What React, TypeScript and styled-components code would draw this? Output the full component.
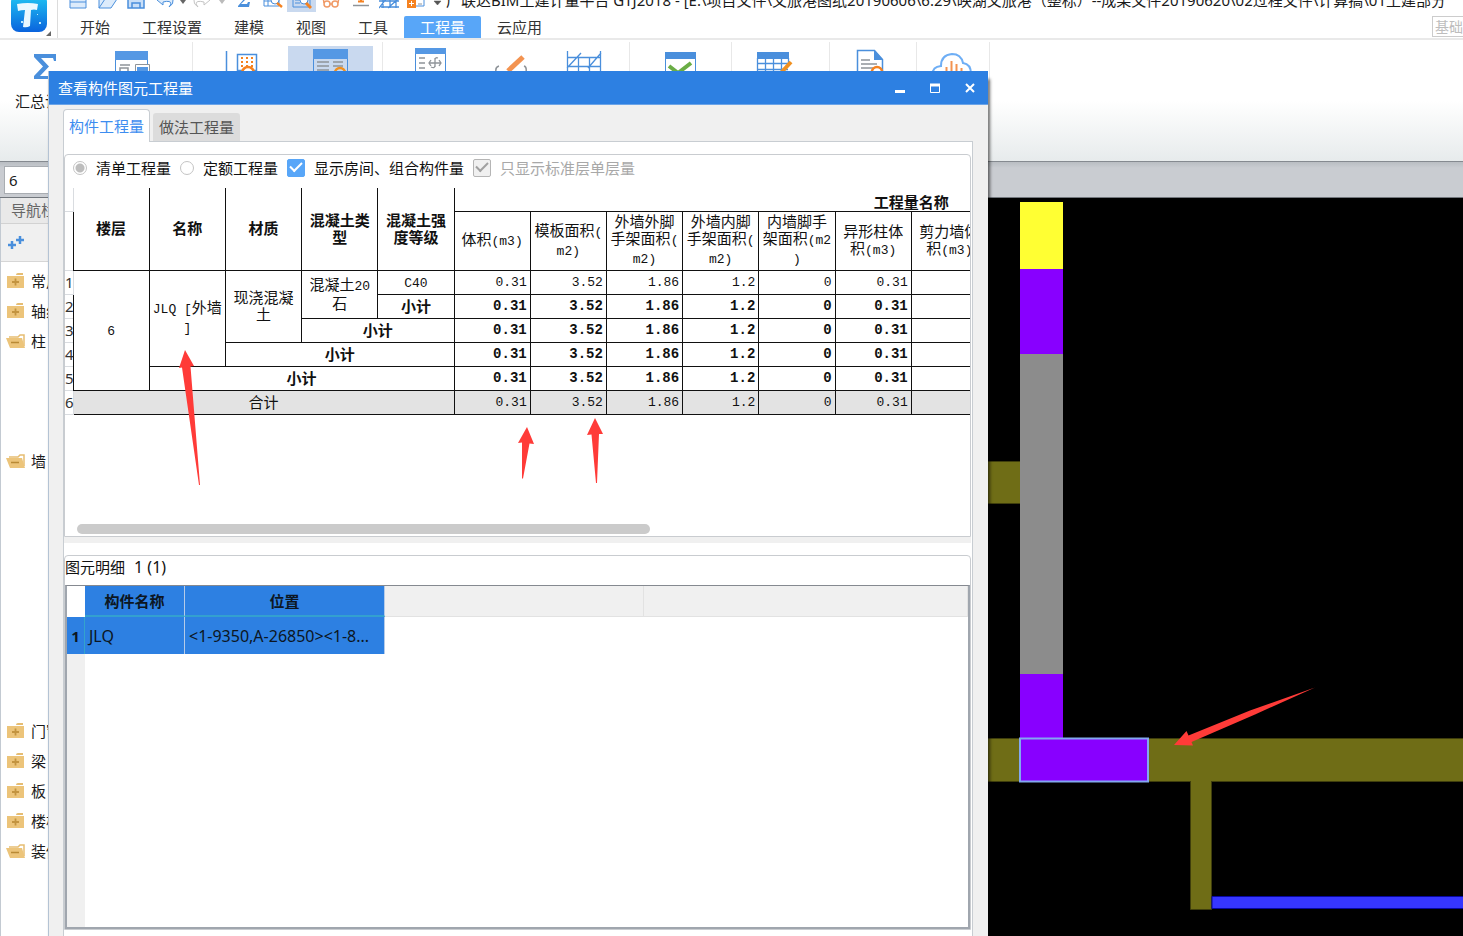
import React from "react";
import styled, { createGlobalStyle, css } from "styled-components";

const GlobalStyle = createGlobalStyle`
  * { box-sizing: border-box; }
  body {
    margin: 0;
    background: #000;
    color: #1a1a1a;
    font: 15px/20px "Noto Sans", "Noto Sans CJK SC", sans-serif;
  }
  button, input { font: inherit; color: inherit; }
  button { border: 0; padding: 0; margin: 0; background: none; }
`;

const Shell = styled.div`
  position: relative;
  display: flex;
  flex-direction: column;
  height: 100vh;
  overflow: hidden;
`;

/* ---------- header ---------- */

const Header = styled.header`
  display: flex;
  flex: none;
  height: 40px;
  background: #fff;
  border-bottom: 2px solid #e9e9e9;
`;

const LogoButton = styled.button`
  width: 58px;
  flex: none;
  border-right: 1px solid #dcdcdc;
  svg { display: block; }
`;

const HeaderMain = styled.div`
  flex: 1;
  min-width: 0;
  display: flex;
  flex-direction: column;
`;

const QuickRow = styled.div`
  display: flex;
  height: 16px;
  padding-left: 5px;
  overflow: hidden;
`;

const QuickButton = styled.button<{ $width: number; $active?: boolean }>`
  flex: none;
  display: flex;
  justify-content: center;
  width: ${(p) => p.$width}px;
  height: 12px;
  background: ${(p) => (p.$active ? "#c9d9ef" : "transparent")};
  svg { flex: none; }
`;

const WindowTitle = styled.h1`
  margin: -10px 0 0;
  font-size: 15px;
  line-height: 20px;
  font-weight: 400;
  white-space: nowrap;
`;

const MenuRow = styled.nav`
  display: flex;
  height: 23px;
  padding-left: 6px;
`;

const MenuTab = styled.button<{ $active?: boolean }>`
  padding: 0 16px;
  line-height: 22px;
  white-space: nowrap;
  color: ${(p) => (p.$active ? "#fff" : "#333")};
  background: ${(p) => (p.$active ? "#58a6f8" : "transparent")};
  border-radius: 2px 2px 0 0;
`;

const SearchBox = styled.div`
  width: 31px;
  height: 21px;
  margin-left: auto;
  padding-left: 2px;
  overflow: hidden;
  white-space: nowrap;
  font-size: 14px;
  line-height: 19px;
  color: #bdbdbd;
  border: 1px solid #ccc;
  border-right: 0;
`;

/* ---------- ribbon ---------- */

const Ribbon = styled.div`
  display: flex;
  flex: none;
  height: 122px;
  padding-top: 2px;
  background: linear-gradient(#fff 50%, #e7ebec);
  border-bottom: 1px solid #858a90;
`;

const RibbonGroup = styled.div<{ $width: number }>`
  display: flex;
  width: ${(p) => p.$width}px;
  border-right: 1px solid #e8e8e8;
`;

const RibbonButton = styled.button<{ $width: number; $active?: boolean }>`
  display: flex;
  flex-direction: column;
  align-items: center;
  width: ${(p) => p.$width}px;
  height: 80px;
  margin-top: 4px;
  gap: 5px;
  background: ${(p) => (p.$active ? "#c9d9ef" : "transparent")};
  svg { display: block; flex: none; }
`;

/* ---------- workspace ---------- */

const FilterStrip = styled.div`
  flex: none;
  height: 36px;
  padding: 4px;
  background: linear-gradient(#b9bdc2, #c9ccd1 6px);
  border-bottom: 1px solid #72777d;
`;

const FloorInput = styled.input`
  display: block;
  width: 180px;
  height: 28px;
  padding: 0 4px;
  border: 1px solid #a9adb2;
  background: #fff;
  outline: 0;
`;

const Workspace = styled.div`
  flex: 1;
  min-height: 0;
  display: grid;
  grid-template-columns: 260px 1fr;
`;

const Sidebar = styled.aside`
  display: flex;
  flex-direction: column;
  background: #fff;
  border-left: 1px solid #c3cad2;
`;

const SidebarTitle = styled.div`
  height: 26px;
  padding-left: 10px;
  line-height: 25px;
  color: #666;
  background: #e9e9e9;
  border-bottom: 1px solid #d2d2d2;
`;

const SidebarTools = styled.div`
  height: 38px;
  padding: 12px 7px;
  background: #f0f0f0;
  border-bottom: 1px solid #d6d6d6;
  svg { display: block; }
`;

const Tree = styled.ul`
  margin: 0;
  padding: 4px 0 0 5px;
  list-style: none;
`;

const ROW = 30;

const TreeItem = styled.li<{ $rows: number }>`
  min-height: ${(p) => ROW * (1 + p.$rows)}px;
`;

const TreeButton = styled.button`
  display: flex;
  align-items: center;
  gap: 5px;
  height: ${ROW}px;
`;

const Canvas = styled.svg`
  display: block;
  width: 100%;
  height: 100%;
  background: #000;
`;

/* ---------- dialog ---------- */

const Dialog = styled.section`
  position: absolute;
  top: 71px;
  bottom: 0;
  left: 48px;
  width: 940px;
  display: flex;
  flex-direction: column;
  background: #f0f0f0;
  border-left: 1px solid #b4c3d4;
  box-shadow: 2px 8px 3px rgba(0, 0, 0, 0.55);
`;

const TitleBar = styled.div`
  display: flex;
  flex: none;
  align-items: center;
  justify-content: space-between;
  height: 34px;
  padding: 0 9px;
  color: #fff;
  background: #2d80e2;
  border-bottom: 1px solid #6ba4e8;
`;

const DialogTitle = styled.h2`
  margin: 0;
  font-size: 15px;
  font-weight: 400;
`;

const WindowButtons = styled.div`
  display: flex;
  gap: 17px;
`;

const WindowButton = styled.button`
  width: 18px;
  height: 18px;
  svg { display: block; }
`;

const TabRow = styled.div`
  display: flex;
  flex: none;
  align-items: flex-end;
  gap: 3px;
  height: 36px;
  padding: 4px 15px 0 14px;
`;

const Tab = styled.button<{ $active?: boolean }>`
  width: 87px;
  white-space: nowrap;
  ${(p) =>
    p.$active
      ? css`
          position: relative;
          height: 33px;
          margin-bottom: -1px;
          color: #3d8df0;
          background: #fff;
          border: 1px solid #c8cdd2;
          border-bottom: 0;
          border-radius: 4px 4px 0 0;
        `
      : css`
          height: 28px;
          color: #555;
          background: #dcdcdc;
          border-radius: 3px 3px 0 0;
        `}
`;

const TabPanel = styled.div`
  flex: 1;
  min-height: 0;
  display: flex;
  flex-direction: column;
  margin: 0 15px 0 14px;
  padding: 12px 1px 0 0;
  background: #fff;
  border: 1px solid #c8cdd2;
  border-bottom: 0;
`;

const QuantityBox = styled.div`
  flex: none;
  display: flex;
  flex-direction: column;
  height: 383px;
  border: 1px solid #c9ccd0;
  border-radius: 4px 4px 0 0;
`;

const Options = styled.div`
  display: flex;
  align-items: center;
  height: 25px;
  padding-left: 8px;
  gap: 9px;
`;

const Option = styled.label<{ $muted?: boolean }>`
  display: flex;
  align-items: center;
  gap: 9px;
  white-space: nowrap;
  color: ${(p) => (p.$muted ? "#a8a8a8" : "#111")};
`;

const Radio = styled.input`
  appearance: none;
  width: 14px;
  height: 14px;
  margin: 0;
  border: 1px solid #c4c4c4;
  border-radius: 50%;
  background: #fff;
  &:checked {
    background: radial-gradient(circle, #bdbdbd 4px, #fff 5px);
  }
`;

const Check = styled.input`
  appearance: none;
  width: 18px;
  height: 18px;
  margin: 0;
  display: grid;
  place-items: center;
  border-radius: 2px;
  background: #58a6f8;
  border: 1px solid #58a6f8;
  &::before {
    content: "";
    width: 10px;
    height: 5px;
    margin-bottom: 4px;
    border: solid #fff;
    border-width: 0 0 2px 2px;
    transform: rotate(-45deg);
  }
  &:disabled {
    background: #f0f0f0;
    border-color: #b5b5b5;
  }
  &:disabled::before { border-color: #a0a0a0; }
`;

const GridScroll = styled.div`
  flex: 1;
  margin-top: 8px;
  overflow: hidden;
`;

const QuantityTable = styled.table`
  width: 1304px;
  table-layout: fixed;
  border-collapse: collapse;
  color: #111;
  line-height: 17px;
  th, td {
    padding: 0;
    border: 1px solid #111;
    text-align: center;
    font-weight: 400;
  }
  tr:first-child > th { border-top: 0; }
`;

const RowHead = styled.th`
  && {
    border: 1px solid #d9dce0;
    border-left: 0;
    color: #333;
  }
`;

const HeadCell = styled.th<{ $bold?: boolean; $bottom?: boolean }>`
  && {
    font-weight: ${(p) => (p.$bold ? 700 : 400)};
    vertical-align: ${(p) => (p.$bottom ? "bottom" : "middle")};
  }
`;

const BodyRow = styled.tr<{ $total?: boolean }>`
  height: 24px;
  td { background: ${(p) => (p.$total ? "#e3e3e3" : "#fff")}; }
`;

const TextCell = styled.td<{ $bold?: boolean }>`
  && { font-weight: ${(p) => (p.$bold ? 700 : 400)}; }
`;

const NumberCell = styled.td<{ $bold?: boolean }>`
  && {
    padding-right: 3px;
    text-align: right;
    font-family: "Liberation Mono", monospace;
    font-size: ${(p) => (p.$bold ? 14 : 13)}px;
    font-weight: ${(p) => (p.$bold ? 700 : 400)};
  }
`;

const Line = styled.span`
  display: block;
  white-space: nowrap;
`;

const Latin = styled.span`
  font-family: "Liberation Mono", monospace;
  font-size: 13px;
  white-space: pre;
`;

const ScrollTrack = styled.div`
  padding: 0 12px 2px;
`;

const ScrollThumb = styled.div`
  width: 65%;
  height: 10px;
  border-radius: 5px;
  background: #cbcbcb;
`;

const Splitter = styled.div`
  flex: none;
  height: 6px;
  margin-bottom: 12px;
  background: #f0f0f0;
`;

const DetailBox = styled.div`
  flex: 1;
  min-height: 0;
  display: flex;
  flex-direction: column;
  margin-bottom: 6px;
  border: 1px solid #c9ccd0;
  border-radius: 4px 4px 0 0;
`;

const DetailTitle = styled.div`
  flex: none;
  display: flex;
  gap: 9px;
  height: 29px;
  line-height: 22px;
  color: #111;
`;

const DetailCount = styled.span`
  font-size: 16px;
`;

const DetailFrame = styled.div`
  flex: 1;
  display: flex;
  flex-direction: column;
  border: 2px solid #a0a6ae;
  border-top: 1px solid #858990;
`;

const DetailTable = styled.table`
  width: 100%;
  table-layout: fixed;
  border-collapse: separate;
  border-spacing: 0;
  color: #0c1622;
  th, td { padding: 0; text-align: left; }
`;

const DetailHead = styled.th<{ $filled?: boolean }>`
  && {
    height: 31px;
    text-align: center;
    background: ${(p) => (p.$filled ? "#2d80e2" : "#f0f0f0")};
    border-right: 1px solid ${(p) => (p.$filled ? "#b5cbe8" : "#e2e2e2")};
    border-bottom: ${(p) => (p.$filled ? "2px solid #33a0cf" : "1px solid #e2e2e2")};
  }
`;

const DetailCorner = styled.td`
  background: #fff;
`;

const DetailIndex = styled.th`
  && {
    height: 37px;
    text-align: center;
    background: #2d80e2;
    border-right: 1px solid #33a3cc;
  }
`;

const DetailCell = styled.td`
  && {
    padding-left: 4px;
    font-size: 16px;
    white-space: nowrap;
    background: #2d80e2;
    border-right: 1px solid #b5cbe8;
  }
`;

const DetailGutter = styled.div`
  flex: 1;
  width: 18px;
  background: #f0f0f0;
`;

const Marks = styled.svg`
  position: absolute;
  top: 0;
  left: 0;
  width: 100%;
  height: 100%;
  pointer-events: none;
`;

/* ---------- icons ---------- */

const BLUE = "#4a8fdc";
const ORANGE = "#f58220";
const GREY = "#8f9499";

const Logo = () => (
  <svg width="57" height="38" viewBox="0 0 57 38">
    <defs>
      <linearGradient id="logo" x1="0" y1="0" x2="0" y2="1">
        <stop offset="0" stopColor="#20c8f4" />
        <stop offset="1" stopColor="#0a63dd" />
      </linearGradient>
    </defs>
    <rect x="11" y="-6" width="36" height="38" rx="8" fill="url(#logo)" />
    <path d="M17 4q11-2 21 0l-1 6q-3-1-6 0l-1 16q-3 2-7 1l2-17q-4 0-7 1z" fill="#e9f8ff" />
    <path d="M21 21h2v2h-2zM39 22h2v2h-2zM37 14h1v1h-1z" fill="#bfeaff" />
    <path d="M51 31v5h-5z" fill="#666" />
  </svg>
);

const quickArt: Record<string, React.ReactNode> = {
  save: <path d="M1-5h16v13H1zM1 2h16" fill="#dcebfb" stroke={BLUE} />,
  open: <path d="M1 8V-5h10M1 8l6-9h12l-6 9z" fill="#dcebfb" stroke={BLUE} />,
  disk: <path d="M1-6h16V8H1zM5 8V3h8v5" fill="#c9dff8" stroke={BLUE} strokeWidth="1.5" />,
  undo: <path d="M7-6L1 0l6 5V2q8-2 8 2l-2 3q5-3 4-7-2-4-10-3z" fill="#dcebfb" stroke={BLUE} />,
  redo: <path d="M11-6l6 6-6 5V2q-8-2-8 2l2 3q-5-3-4-7 2-4 10-3z" fill="#fff" stroke="#c4c4c4" />,
  caret: <path d="M6 0h6L9 4z" fill="#666" />,
  caretLight: <path d="M6 0h6L9 4z" fill="#bbb" />,
  sigma: <path d="M4 6l6-7h2L7 4h6l1-2h2l-1 5H4z" fill={BLUE} />,
  gridSearch: (
    <g fill="none" stroke={BLUE}>
      <path d="M0-5h15V6H0zM0 1h8M4-5V6" />
      <circle cx="11" cy="0" r="4" fill="#fff" />
      <path d="M13 3l5 4" stroke={ORANGE} strokeWidth="2.5" />
    </g>
  ),
  viewSearch: (
    <g fill="none" stroke={BLUE}>
      <path d="M0-5h17V7H0zM2 0h5M2 3h5" />
      <circle cx="11" cy="0" r="4" fill="#fff" />
      <path d="M13 3l5 5" stroke={ORANGE} strokeWidth="3" />
    </g>
  ),
  glasses: (
    <g fill="none" stroke="#f09a66" strokeWidth="1.5">
      <circle cx="5" cy="4" r="3" />
      <circle cx="13" cy="4" r="3" />
      <path d="M2 3L1-3M16 3l1-6M8 4h2" />
    </g>
  ),
  level: (
    <g fill="none">
      <path d="M1 5.500h16" stroke={GREY} strokeWidth="1.500" />
      <path d="M9-4v6M6 1.500h6" stroke={ORANGE} strokeWidth="2" />
    </g>
  ),
  axes: <path d="M-1 1h20M1 7h18M3-5V8M10-5V8M16-5V8M-1 8L6-1M8 8l10-9" fill="none" stroke={BLUE} strokeWidth="1.300" />,
  calc: (
    <g>
      <path d="M8-5h9V6H8" fill="none" stroke={BLUE} />
      <path d="M0-1h9v9H0z" fill={ORANGE} />
      <path d="M4.500 1v5M2 3.500h5" stroke="#fff" />
      <path d="M11 4h4" stroke={GREY} />
    </g>
  ),
  more: <path d="M5 1h7L8.500 5zM5-2h7" fill="#555" stroke="#555" strokeWidth=".5" />,
};

const quickItems: { art: string; width: number; label: string; active?: boolean }[] = [
  { art: "save", width: 29, label: "新建" },
  { art: "open", width: 29, label: "打开" },
  { art: "disk", width: 29, label: "保存" },
  { art: "undo", width: 29, label: "撤销" },
  { art: "caret", width: 8, label: "撤销列表" },
  { art: "redo", width: 30, label: "恢复" },
  { art: "caretLight", width: 10, label: "恢复列表" },
  { art: "sigma", width: 32, label: "汇总" },
  { art: "gridSearch", width: 28, label: "查看报表" },
  { art: "viewSearch", width: 29, label: "查看工程量", active: true },
  { art: "glasses", width: 29, label: "查看" },
  { art: "level", width: 31, label: "标高" },
  { art: "axes", width: 25, label: "轴网" },
  { art: "calc", width: 29, label: "计算" },
  { art: "more", width: 16, label: "更多" },
];

const ribbonArt: Record<string, React.ReactNode> = {
  sigma: <path d="M11 8h22v7h-2l-1-3H18l8 8.500-9 9.500h13l1-3h2v6H11v-3l9-9.500-9-9.500z" fill={BLUE} />,
  panel: (
    <g>
      <path d="M5 5h33v9H5z" fill="#5598e4" />
      <path d="M5.500 14v20M37.500 14v4" stroke={BLUE} />
      <path d="M10 19h10M10 22h8v8h-8z" fill="none" stroke={GREY} strokeWidth="1.500" />
      <path d="M25.500 18.500h14v14h-14z" fill="#fff" stroke={GREY} />
      <path d="M27 21h11v9H27z" fill="#5598e4" />
    </g>
  ),
  search: (
    <g fill="none">
      <path d="M7.500 5v30" stroke={BLUE} strokeWidth="1.500" />
      <path d="M18.500 8.500h19v16h-19z" stroke={BLUE} strokeWidth="1.500" />
      <path d="M22 12h12M22 16h12M22 20h12" stroke={ORANGE} strokeWidth="2" strokeDasharray="2 3" />
      <circle cx="29" cy="27" r="6" fill="#fff" stroke={ORANGE} strokeWidth="2.500" />
    </g>
  ),
  element: (
    <g fill="none">
      <path d="M4.500 3.500h34v30h-34z" stroke={BLUE} />
      <path d="M4 3h35v10H4z" fill="#5598e4" />
      <path d="M8 16h12M8 20h12M8 24h12M24 16h10M24 20h10" stroke={GREY} strokeWidth="1.500" />
      <circle cx="31" cy="27" r="5" stroke="#f09020" strokeWidth="2.500" />
    </g>
  ),
  formula: (
    <g fill="none">
      <path d="M6.500 3.500h30v30h-30z" stroke={BLUE} />
      <path d="M6 2h31v6H6z" fill="#5598e4" />
      <path d="M10 12h6M10 17h6M10 22h6" stroke={GREY} strokeWidth="1.500" />
      <path d="M20 17h12M26 12v9M22 14l-2 3 2 3M30 14l2 3-2 3M22 21q4 2 4-2M26 14q0-3 3-2" stroke={GREY} strokeWidth="1.300" />
    </g>
  ),
  pencil: (
    <g fill="none">
      <path d="M9 20q-4 1-3 6M34 20q3 1 2 6" stroke={GREY} strokeWidth="1.500" />
      <path d="M18 25L33 11" stroke="#f39350" strokeWidth="5" />
    </g>
  ),
  grid: (
    <path d="M4.500 5v30M15.500 11v24M26.500 11v24M37.500 5v30M5 11.500h32M5 20.500h32M5 26.500h32M4 22L18 7M25 22L38 7" fill="none" stroke={BLUE} strokeWidth="1.300" />
  ),
  check: (
    <g fill="none">
      <path d="M6.500 6.500h30v28h-30z" stroke={BLUE} />
      <path d="M6 6h31v7H6z" fill="#4a8fdc" />
      <path d="M10 20l9 7 13-10" stroke="#6aad45" strokeWidth="4" />
    </g>
  ),
  tableEdit: (
    <g fill="none">
      <path d="M4 6h32v7H4z" fill="#4a8fdc" />
      <path d="M4.500 12v22M12.500 12v22M20.500 12v22M28.500 12v22M35.500 12v8M4 17.500h31M4 23.500h31" stroke={BLUE} strokeWidth="1.300" />
      <path d="M25 30L38 16" stroke="#f09020" strokeWidth="4" />
    </g>
  ),
  doc: (
    <g fill="none">
      <path d="M7.500 34V4.500h17l8 9V34" stroke={BLUE} strokeWidth="1.500" />
      <path d="M24 4l9 10h-9z" fill="#4a8fdc" />
      <path d="M11 14h9M11 18h16M11 22h12M11 26h8" stroke={GREY} strokeWidth="1.500" />
      <circle cx="27" cy="26" r="5" fill="#fff" stroke={ORANGE} strokeWidth="2.500" />
    </g>
  ),
  cloud: (
    <g fill="none">
      <path d="M3 28q-1-7 8-8 0-11 11-12 9 0 11 9 8 1 8 11" stroke="#6eaef5" strokeWidth="2" />
      <path d="M16.500 21v11M21.500 15v17M26.500 18v14M31.500 22v8" stroke="#f39350" strokeWidth="2" />
    </g>
  ),
};

const RibbonIcon = ({ art }: { art: string }) => (
  <svg width="44" height="40" viewBox="0 0 44 40">
    {ribbonArt[art]}
  </svg>
);

type RibbonItem = { art: string; width: number; label: string; text?: string; active?: boolean };

const ribbonGroups: { width: number; items: RibbonItem[] }[] = [
  {
    width: 193,
    items: [
      { art: "sigma", width: 90, label: "汇总计算", text: "汇总计算" },
      { art: "panel", width: 84, label: "汇总选中图元" },
    ],
  },
  {
    width: 190,
    items: [
      { art: "search", width: 95, label: "查看计算式" },
      { art: "element", width: 85, label: "查看工程量", active: true },
    ],
  },
  {
    width: 247,
    items: [
      { art: "formula", width: 95, label: "查看钢筋量" },
      { art: "pencil", width: 68, label: "编辑钢筋" },
      { art: "grid", width: 78, label: "钢筋三维" },
    ],
  },
  { width: 102, items: [{ art: "check", width: 101, label: "合法性检查" }] },
  { width: 98, items: [{ art: "tableEdit", width: 86, label: "表格输入" }] },
  { width: 87, items: [{ art: "doc", width: 84, label: "查看报表" }] },
  { width: 73, items: [{ art: "cloud", width: 70, label: "云指标" }] },
];

const FolderIcon = ({ open }: { open: boolean }) => (
  <svg width="20" height="18" viewBox="0 0 20 18">
    {open ? (
      <g>
        <path d="M3 5h9l2-2h4v11" fill="#fff" stroke="#e6bd72" strokeWidth="1.500" />
        <path d="M0 6h16l3 10H4z" fill="#ecc47a" />
        <path d="M5 10.500h8" stroke="#b98a35" strokeWidth="1.500" />
      </g>
    ) : (
      <g>
        <path d="M1 4h17v12H1z" fill="#ecc47a" />
        <path d="M10 3q0-2 2-2h5v2z" fill="#e6bd72" />
        <path d="M6 10h7M9.500 6.500v7" stroke="#c39440" strokeWidth="1.800" />
      </g>
    )}
  </svg>
);

/* ---------- data ---------- */

const menus = ["开始", "工程设置", "建模", "视图", "工具", "工程量", "云应用"];

const tree = [
  { name: "常用构件类型", open: false, rows: 0 },
  { name: "轴线", open: false, rows: 0 },
  { name: "柱", open: true, rows: 3 },
  { name: "墙", open: true, rows: 8 },
  { name: "门窗洞", open: false, rows: 0 },
  { name: "梁", open: false, rows: 0 },
  { name: "板", open: false, rows: 0 },
  { name: "楼梯", open: false, rows: 0 },
  { name: "装修", open: true, rows: 0 },
];

const groupHeads = [["楼层"], ["名称"], ["材质"], ["混凝土类", "型"], ["混凝土强", "度等级"]];

const measureHeads = [
  ["体积(m3)"],
  ["模板面积(", "m2)"],
  ["外墙外脚", "手架面积(", "m2)"],
  ["外墙内脚", "手架面积(", "m2)"],
  ["内墙脚手", "架面积(m2", ")"],
  ["异形柱体", "积(m3)"],
  ["剪力墙体", "积(m3)"],
];

const values = ["0.31", "3.52", "1.86", "1.2", "0", "0.31"];
const SPARE = 6;

type Cell = { lines: string[]; rowSpan?: number; colSpan?: number; bold?: boolean };

const bodyRows: { cells: Cell[]; bold?: boolean; total?: boolean }[] = [
  {
    cells: [
      { lines: ["6"], rowSpan: 5 },
      { lines: ["JLQ [外墙", "]"], rowSpan: 4 },
      { lines: ["现浇混凝", "土"], rowSpan: 3 },
      { lines: ["混凝土20", "石"], rowSpan: 2 },
      { lines: ["C40"] },
    ],
  },
  { cells: [{ lines: ["小计"], bold: true }], bold: true },
  { cells: [{ lines: ["小计"], colSpan: 2, bold: true }], bold: true },
  { cells: [{ lines: ["小计"], colSpan: 3, bold: true }], bold: true },
  { cells: [{ lines: ["小计"], colSpan: 4, bold: true }], bold: true },
  { cells: [{ lines: ["合计"], colSpan: 5 }], total: true },
];

/* Latin runs use the narrow monospace face of the report grid. */
const Lines = ({ lines }: { lines: string[] }) => (
  <>
    {lines.map((line) => (
      <Line key={line}>
        {line
          .split(/([\x20-\x7e]+)/)
          .filter(Boolean)
          .map((run) => (/^[\x20-\x7e]/.test(run) ? <Latin key={run}>{run}</Latin> : run))}
      </Line>
    ))}
  </>
);

const QuantityGrid = () => (
  <QuantityTable>
    <colgroup>
      <col style={{ width: 8 }} />
      {Array.from({ length: 17 }, (_, i) => (
        <col key={i} />
      ))}
    </colgroup>
    <thead>
      <tr style={{ height: 23 }}>
        <RowHead />
        {groupHeads.map((h) => (
          <HeadCell key={h[0]} rowSpan={2} $bold>
            <Lines lines={h} />
          </HeadCell>
        ))}
        <HeadCell colSpan={12} $bold $bottom>
          工程量名称
        </HeadCell>
      </tr>
      <tr style={{ height: 59 }}>
        <RowHead />
        {measureHeads.map((h) => (
          <HeadCell key={h.join("")}>
            <Lines lines={h} />
          </HeadCell>
        ))}
        {Array.from({ length: SPARE - 1 }, (_, i) => (
          <HeadCell key={i} />
        ))}
      </tr>
    </thead>
    <tbody>
      {bodyRows.map((row, r) => (
        <BodyRow key={r} $total={row.total}>
          <RowHead scope="row">{r + 1}</RowHead>
          {row.cells.map((c) => (
            <TextCell key={c.lines[0]} rowSpan={c.rowSpan} colSpan={c.colSpan} $bold={c.bold}>
              <Lines lines={c.lines} />
            </TextCell>
          ))}
          {values.map((v, i) => (
            <NumberCell key={i} $bold={row.bold}>
              {v}
            </NumberCell>
          ))}
          {Array.from({ length: SPARE }, (_, i) => (
            <NumberCell key={i} />
          ))}
        </BodyRow>
      ))}
    </tbody>
  </QuantityTable>
);

const QuantityDialog = () => (
  <Dialog role="dialog" aria-labelledby="dialog-title">
    <TitleBar>
      <DialogTitle id="dialog-title">查看构件图元工程量</DialogTitle>
      <WindowButtons>
        <WindowButton aria-label="最小化">
          <svg width="18" height="18">
            <path d="M4 12.500h10" stroke="#fff" strokeWidth="3" />
          </svg>
        </WindowButton>
        <WindowButton aria-label="最大化">
          <svg width="18" height="18">
            <path d="M4.500 6v7.500h9V6" fill="none" stroke="#fff" />
            <path d="M4 6h10" stroke="#fff" strokeWidth="3" />
          </svg>
        </WindowButton>
        <WindowButton aria-label="关闭">
          <svg width="18" height="18">
            <path d="M5 5l8 8M13 5l-8 8" stroke="#fff" strokeWidth="2" />
          </svg>
        </WindowButton>
      </WindowButtons>
    </TitleBar>
    <TabRow role="tablist">
      <Tab role="tab" aria-selected $active>
        构件工程量
      </Tab>
      <Tab role="tab">做法工程量</Tab>
    </TabRow>
    <TabPanel>
      <QuantityBox>
        <Options>
          <Option>
            <Radio type="radio" name="mode" defaultChecked />
            清单工程量
          </Option>
          <Option>
            <Radio type="radio" name="mode" />
            定额工程量
          </Option>
          <Option>
            <Check type="checkbox" defaultChecked />
            显示房间、组合构件量
          </Option>
          <Option $muted>
            <Check type="checkbox" defaultChecked disabled />
            只显示标准层单层量
          </Option>
        </Options>
        <GridScroll>
          <QuantityGrid />
        </GridScroll>
        <ScrollTrack>
          <ScrollThumb />
        </ScrollTrack>
      </QuantityBox>
      <Splitter />
      <DetailBox>
        <DetailTitle>
          图元明细 <DetailCount>1 (1)</DetailCount>
        </DetailTitle>
        <DetailFrame>
          <DetailTable>
            <colgroup>
              <col style={{ width: 18 }} />
              <col style={{ width: 100 }} />
              <col style={{ width: 200 }} />
              <col style={{ width: 259 }} />
              <col />
            </colgroup>
            <thead>
              <tr>
                <DetailCorner />
                <DetailHead $filled>构件名称</DetailHead>
                <DetailHead $filled>位置</DetailHead>
                <DetailHead />
                <DetailHead />
              </tr>
            </thead>
            <tbody>
              <tr>
                <DetailIndex scope="row">1</DetailIndex>
                <DetailCell>JLQ</DetailCell>
                <DetailCell>&lt;1-9350,A-26850&gt;&lt;1-8...</DetailCell>
              </tr>
            </tbody>
          </DetailTable>
          <DetailGutter />
        </DetailFrame>
      </DetailBox>
    </TabPanel>
    <Marks>
      <g transform="translate(-49 -71)" fill="#ff3b38">
        <path d="M185 350l9 16-3.500.5L200 485h-1L182 367.500l-3 .5z" />
        <path d="M527 427l7 17-4.500-.5-6.500 35h-1v-36l-4 .5z" />
        <path d="M595 418l8 16h-4l-2 49h-1l-4.500-48.500-4.500.5z" />
      </g>
    </Marks>
  </Dialog>
);

const Drawing = () => (
  <Canvas>
    <g transform="translate(-260 -198)">
      <g fill="#6f6d16" stroke="#3f3e0c">
        <path d="M900 461.500h121v42H900z" />
        <path d="M1190.500 770h21v139.500h-21z" />
        <path d="M900 738.500h4000v43H900z" />
        <path d="M1191 778h20v5h-20z" stroke="none" />
      </g>
      <path d="M1020 202h43v67h-43z" fill="#ffff33" />
      <path d="M1020 269h43v86h-43zM1020 674h43v66h-43z" fill="#8800ff" />
      <path d="M1020 354h43v320h-43z" fill="#8c8c8c" />
      <path d="M1020 738.500h128v43h-128z" fill="#8800ff" stroke="#82a8f0" strokeWidth="2" />
      <path d="M1212 896.500h3000v12H1212z" fill="#3636ff" stroke="#0808a0" />
      <path d="M1174 745l12.500-14 2 4.500L1250 710.500l65-23-60 27-63.500 27.500 1.500 3.500z" fill="#ff3b38" />
    </g>
  </Canvas>
);

export default function App() {
  return (
    <>
      <GlobalStyle />
      <Shell>
        <Header>
          <LogoButton aria-label="主菜单">
            <Logo />
          </LogoButton>
          <HeaderMain>
            <QuickRow>
              {quickItems.map((q) => (
                <QuickButton key={q.label} $width={q.width} $active={q.active} aria-label={q.label}>
                  <svg width="20" height="12" viewBox="-1 0 20 12">
                    {quickArt[q.art]}
                  </svg>
                </QuickButton>
              ))}
              <WindowTitle>
                广联达BIM土建计量平台 GTJ2018 - [E:\项目文件\文旅港图纸20190606\6.29\映湖文旅港（整标）--成果文件20190620\02过程文件\计算搞\01土建部分
              </WindowTitle>
            </QuickRow>
            <MenuRow>
              {menus.map((m) => (
                <MenuTab key={m} $active={m === "工程量"}>
                  {m}
                </MenuTab>
              ))}
              <SearchBox>基础版</SearchBox>
            </MenuRow>
          </HeaderMain>
        </Header>
        <Ribbon>
          {ribbonGroups.map((g) => (
            <RibbonGroup key={g.width} $width={g.width}>
              {g.items.map((it) => (
                <RibbonButton key={it.label} $width={it.width} $active={it.active} aria-label={it.label}>
                  <RibbonIcon art={it.art} />
                  {it.text}
                </RibbonButton>
              ))}
            </RibbonGroup>
          ))}
        </Ribbon>
        <FilterStrip>
          <FloorInput aria-label="楼层" defaultValue="6" />
        </FilterStrip>
        <Workspace>
          <Sidebar>
            <SidebarTitle>导航栏</SidebarTitle>
            <SidebarTools>
              <svg width="18" height="14">
                <path d="M0 9h8M4 5v8M8 4h8M12 0v8" stroke={BLUE} strokeWidth="2.500" />
              </svg>
            </SidebarTools>
            <Tree>
              {tree.map((t) => (
                <TreeItem key={t.name} $rows={t.rows}>
                  <TreeButton>
                    <FolderIcon open={t.open} />
                    {t.name}
                  </TreeButton>
                </TreeItem>
              ))}
            </Tree>
          </Sidebar>
          <Drawing />
        </Workspace>
        <QuantityDialog />
      </Shell>
    </>
  );
}
